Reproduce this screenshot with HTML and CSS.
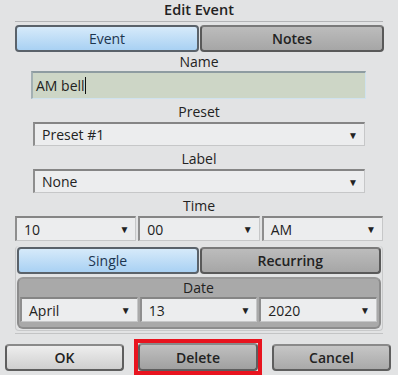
FILE: index.html
```html
<!DOCTYPE html>
<html lang="en">
<head>
    <meta charset="UTF-8">
    <title>Edit Event</title>
    <link rel="stylesheet" href="styles.css">
</head>
<body>
    <div class="dialog">
        <div class="title">Edit Event</div>

        <div class="tabs top-tabs">
            <div class="tab active">Event</div>
            <div class="tab">Notes</div>
        </div>

        <div class="label name-label">Name</div>
        <div class="name-input"><span>AM bell</span><span class="caret"></span></div>

        <div class="label">Preset</div>
        <div class="select wide"><span>Preset #1</span><span class="arrow">&#9660;</span></div>

        <div class="label">Label</div>
        <div class="select wide"><span>None</span><span class="arrow">&#9660;</span></div>

        <div class="label">Time</div>
        <div class="row time-row">
            <div class="select"><span>10</span><span class="arrow">&#9660;</span></div>
            <div class="select"><span>00</span><span class="arrow">&#9660;</span></div>
            <div class="select"><span>AM</span><span class="arrow">&#9660;</span></div>
        </div>

        <div class="group">
            <div class="tabs">
                <div class="tab active">Single</div>
                <div class="tab">Recurring</div>
            </div>
            <div class="date-box">
                <div class="date-label">Date</div>
                <div class="row">
                    <div class="select"><span>April</span><span class="arrow">&#9660;</span></div>
                    <div class="select"><span>13</span><span class="arrow">&#9660;</span></div>
                    <div class="select"><span>2020</span><span class="arrow">&#9660;</span></div>
                </div>
            </div>
        </div>

        <div class="buttons">
            <button class="btn ok">OK</button>
            <div class="highlight">
                <button class="btn delete">Delete</button>
            </div>
            <button class="btn cancel">Cancel</button>
        </div>
    </div>
</body>
</html>
```

FILE: styles.css
```css
* {
    box-sizing: border-box;
}

body {
    margin: 0;
    background-color: #e2e3e4;
    font-family: 'Open Sans', 'Noto Sans', sans-serif;
    font-size: 14px;
    color: #222;
}

.dialog {
    width: 398px;
    height: 375px;
    display: flex;
    flex-direction: column;
}

.title {
    height: 22px;
    margin: 0 15px;
    line-height: 20px;
    text-align: center;
    font-size: 14.5px;
    font-weight: 600;
    border-bottom: 1px solid #b3b4b6;
}

.tabs {
    display: flex;
    gap: 1px;
    height: 27px;
}

.top-tabs {
    margin: 3px 14px 0 15px;
}

.tab {
    flex: 1;
    display: flex;
    align-items: center;
    justify-content: center;
    border: 2px solid #595959;
    border-top-color: #7a7a7a;
    border-radius: 4px;
    background: linear-gradient(#bcbcbc, #a6a6a6);
    font-weight: 600;
    color: #222;
}

.tab.active {
    border-color: #5a626a;
    background: linear-gradient(#d6eafa, #a9d1f3);
    color: #1c3550;
    font-weight: 500;
}

.label {
    height: 23px;
    padding-top: 4px;
    line-height: 18px;
    text-align: center;
}

.name-label {
    height: 18px;
    padding-top: 0;
    margin-top: 1px;
}

.name-input {
    height: 28px;
    margin: 0 32px 0 31px;
    display: flex;
    align-items: center;
    padding-left: 3px;
    background-color: #cdd6c6;
    border: 1px solid #cfe2ee;
    border-top: 2px solid #8e9ca1;
    border-left: 2px solid #a3b0b3;
}

.caret {
    width: 1px;
    height: 17px;
    background-color: #111;
}

.select {
    flex: 1;
    height: 25px;
    display: flex;
    align-items: center;
    justify-content: space-between;
    padding: 0 6px 0 7px;
    background-color: #ecedee;
    border: 1px solid #c6c7c8;
    border-top: 2px solid #858585;
    border-left: 2px solid #8e8e8e;
}

.select.wide {
    flex: none;
    height: 24px;
    margin: 0 33px;
}

.arrow {
    font-size: 10px;
    color: #222;
}

.row {
    display: flex;
    gap: 2px;
}

.time-row {
    margin: 0 15px;
}

.group {
    margin: 5px 15px 0;
    padding: 1px;
    border: 1px solid #c8c9ca;
    border-radius: 4px;
    border-top: none;
}

.date-box {
    margin-top: 3px;
    padding: 0 2px 5px 1px;
    background-color: #a9a9a9;
    border: 2px solid #8c8c8c;
    border-top-color: #9a9a9a;
    border-radius: 6px;
}

.date-label {
    height: 18px;
    line-height: 18px;
    text-align: center;
}

.buttons {
    margin: 2px 15px 0;
    border-top: 1px solid #c3c4c5;
    padding-top: 5px;
    display: flex;
    justify-content: space-between;
    align-items: center;
}

.btn {
    width: 119px;
    height: 27px;
    border: 2px solid #5e5e5e;
    border-top-color: #8a8a8a;
    border-radius: 4px;
    font-family: inherit;
    font-size: 14px;
    font-weight: 600;
    color: #222;
}

.ok {
    margin-left: -10px;
    background: linear-gradient(#eeeeee, #cfcfcf);
}

.highlight {
    display: flex;
    border: 4px solid #e8141f;
}

.delete {
    width: 120px;
    height: 28px;
    background: linear-gradient(#c0c0c0, #a0a0a0);
}

.cancel {
    margin-right: -8px;
    background: linear-gradient(#c6c6c6, #a9a9a9);
}
```
